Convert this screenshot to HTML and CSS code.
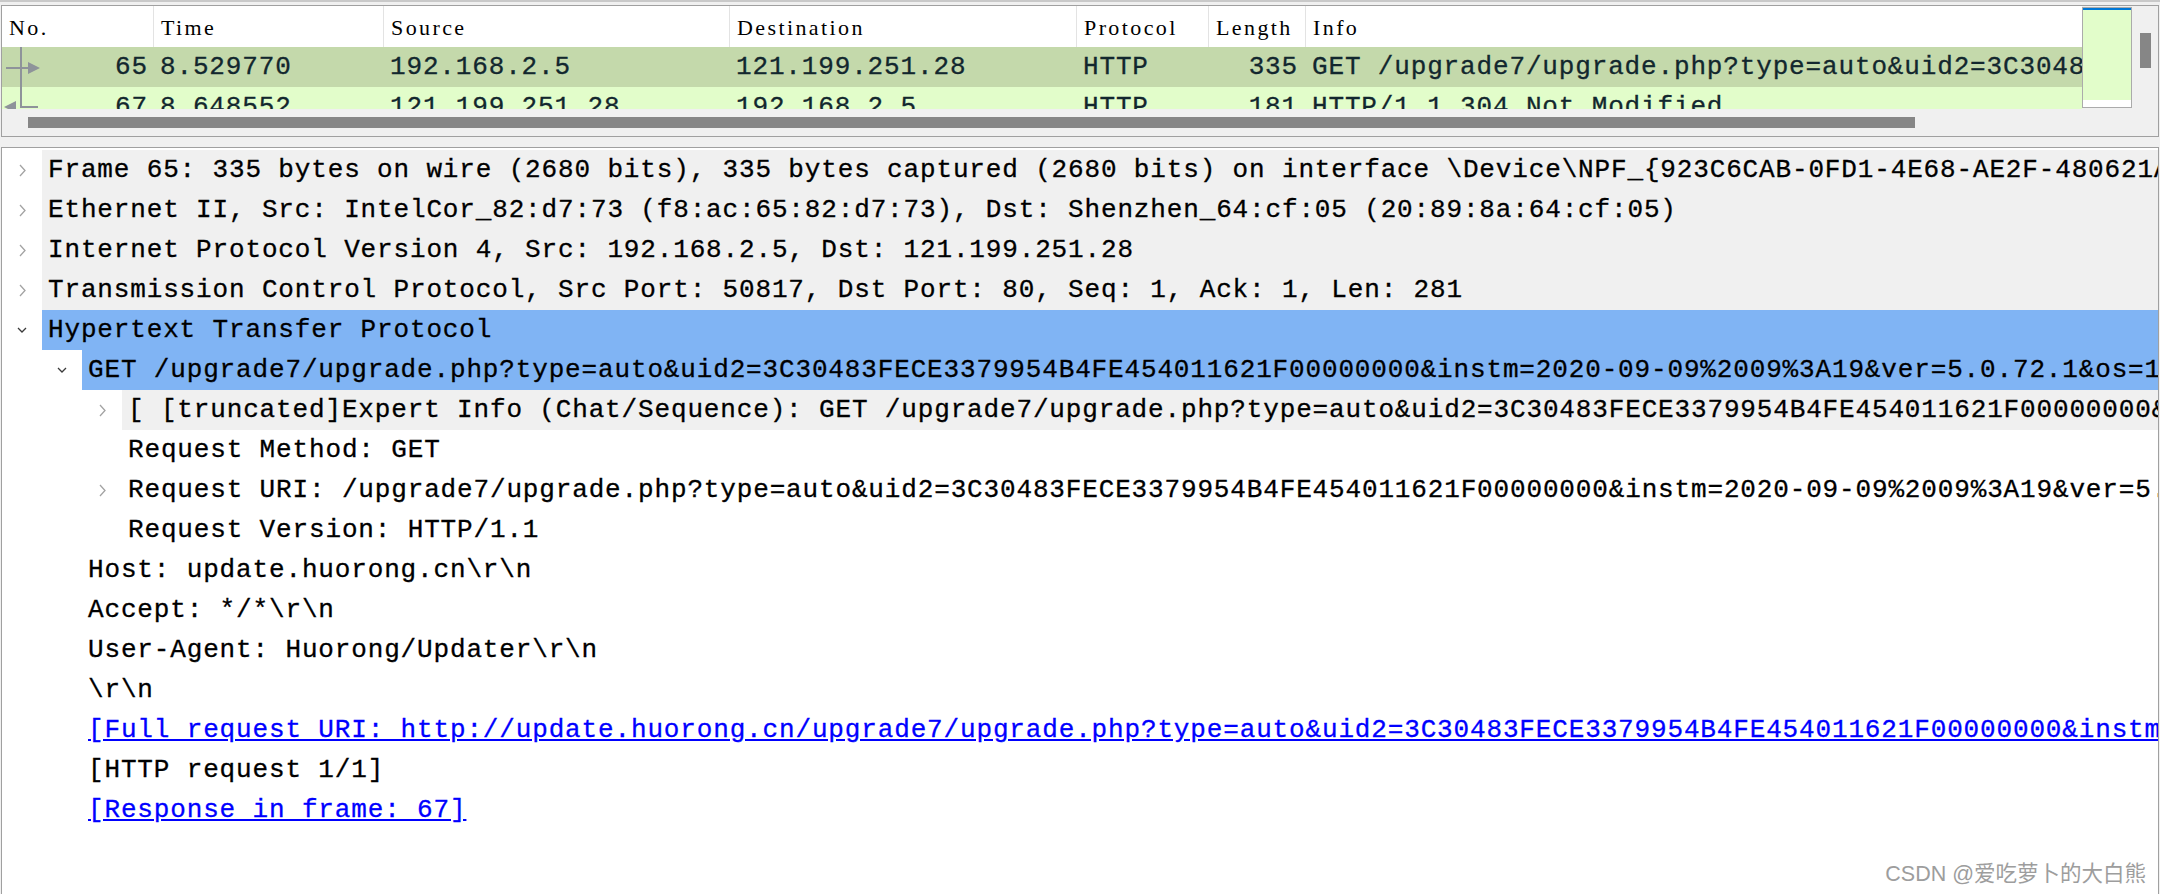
FILE: index.html
```html
<!DOCTYPE html>
<html>

<head>
    <title>Wireshark - Packet 65</title>
    <link rel="stylesheet" href="styles.css">
</head>

<body>
    <div class="topline"></div>

    <div class="list-pane">
        <div class="list-main">
            <div class="packets">
                <div class="cols head">
                    <span>No.</span>
                    <span>Time</span>
                    <span>Source</span>
                    <span>Destination</span>
                    <span>Protocol</span>
                    <span>Length</span>
                    <span class="last">Info</span>
                </div>
                <div class="cols row sel">
                    <span class="num">
                        <svg width="44" height="40" viewBox="0 0 44 40">
                            <path d="M19 0V40M4 21H27" stroke="#8e939a" stroke-width="2" fill="none"/>
                            <path d="M26 15L38 21L26 27Z" fill="#8e939a"/>
                        </svg>
                        <b>65</b>
                    </span>
                    <span>8.529770</span>
                    <span>192.168.2.5</span>
                    <span>121.199.251.28</span>
                    <span>HTTP</span>
                    <span class="right">335</span>
                    <span>GET /upgrade7/upgrade.php?type=auto&amp;uid2=3C30483FECE3379954B4FE454011621F00000000&amp;instm=2020-09-09%2009%3A19</span>
                </div>
                <div class="cols row http">
                    <span class="num">
                        <svg width="44" height="40" viewBox="0 0 44 40">
                            <path d="M19 0V20H36" stroke="#8e939a" stroke-width="2" fill="none"/>
                            <path d="M14 14L2 20L14 26Z" fill="#8e939a"/>
                        </svg>
                        <b>67</b>
                    </span>
                    <span>8.648552</span>
                    <span>121.199.251.28</span>
                    <span>192.168.2.5</span>
                    <span>HTTP</span>
                    <span class="right">181</span>
                    <span>HTTP/1.1 304 Not Modified</span>
                </div>
            </div>
            <div class="minimap"></div>
            <div class="vscroll"><div class="vthumb"></div></div>
        </div>
        <div class="hscroll"><div class="hthumb"></div></div>
    </div>

    <div class="detail-pane">
        <div class="node">
            <span class="tw"><svg width="7" height="13" viewBox="0 0 7 13"><path d="M1 1L6 6.5L1 12" fill="none" stroke="#a3a3a3" stroke-width="1.3"/></svg></span>
            <span class="lbl gray">Frame 65: 335 bytes on wire (2680 bits), 335 bytes captured (2680 bits) on interface \Device\NPF_{923C6CAB-0FD1-4E68-AE2F-480621A</span>
        </div>
        <div class="node">
            <span class="tw"><svg width="7" height="13" viewBox="0 0 7 13"><path d="M1 1L6 6.5L1 12" fill="none" stroke="#a3a3a3" stroke-width="1.3"/></svg></span>
            <span class="lbl gray">Ethernet II, Src: IntelCor_82:d7:73 (f8:ac:65:82:d7:73), Dst: Shenzhen_64:cf:05 (20:89:8a:64:cf:05)</span>
        </div>
        <div class="node">
            <span class="tw"><svg width="7" height="13" viewBox="0 0 7 13"><path d="M1 1L6 6.5L1 12" fill="none" stroke="#a3a3a3" stroke-width="1.3"/></svg></span>
            <span class="lbl gray">Internet Protocol Version 4, Src: 192.168.2.5, Dst: 121.199.251.28</span>
        </div>
        <div class="node">
            <span class="tw"><svg width="7" height="13" viewBox="0 0 7 13"><path d="M1 1L6 6.5L1 12" fill="none" stroke="#a3a3a3" stroke-width="1.3"/></svg></span>
            <span class="lbl gray">Transmission Control Protocol, Src Port: 50817, Dst Port: 80, Seq: 1, Ack: 1, Len: 281</span>
        </div>
        <div class="node">
            <span class="tw"><svg width="10" height="6" viewBox="0 0 10 6"><path d="M1 1L5 5L9 1" fill="none" stroke="#3a3a3a" stroke-width="1.3"/></svg></span>
            <span class="lbl blue">Hypertext Transfer Protocol</span>
        </div>
        <div class="node lv1">
            <span class="tw"><svg width="10" height="6" viewBox="0 0 10 6"><path d="M1 1L5 5L9 1" fill="none" stroke="#3a3a3a" stroke-width="1.3"/></svg></span>
            <span class="lbl blue">GET /upgrade7/upgrade.php?type=auto&amp;uid2=3C30483FECE3379954B4FE454011621F00000000&amp;instm=2020-09-09%2009%3A19&amp;ver=5.0.72.1&amp;os=1 HTTP/1.1\r\n</span>
        </div>
        <div class="node lv2">
            <span class="tw"><svg width="7" height="13" viewBox="0 0 7 13"><path d="M1 1L6 6.5L1 12" fill="none" stroke="#a3a3a3" stroke-width="1.3"/></svg></span>
            <span class="lbl gray">[ [truncated]Expert Info (Chat/Sequence): GET /upgrade7/upgrade.php?type=auto&amp;uid2=3C30483FECE3379954B4FE454011621F00000000&amp;instm=</span>
        </div>
        <div class="node lv2">
            <span class="tw"></span>
            <span class="lbl">Request Method: GET</span>
        </div>
        <div class="node lv2">
            <span class="tw"><svg width="7" height="13" viewBox="0 0 7 13"><path d="M1 1L6 6.5L1 12" fill="none" stroke="#a3a3a3" stroke-width="1.3"/></svg></span>
            <span class="lbl">Request URI: /upgrade7/upgrade.php?type=auto&amp;uid2=3C30483FECE3379954B4FE454011621F00000000&amp;instm=2020-09-09%2009%3A19&amp;ver=5.0.72.1&amp;os=1</span>
        </div>
        <div class="node lv2">
            <span class="tw"></span>
            <span class="lbl">Request Version: HTTP/1.1</span>
        </div>
        <div class="node lv1">
            <span class="tw"></span>
            <span class="lbl">Host: update.huorong.cn\r\n</span>
        </div>
        <div class="node lv1">
            <span class="tw"></span>
            <span class="lbl">Accept: */*\r\n</span>
        </div>
        <div class="node lv1">
            <span class="tw"></span>
            <span class="lbl">User-Agent: Huorong/Updater\r\n</span>
        </div>
        <div class="node lv1">
            <span class="tw"></span>
            <span class="lbl">\r\n</span>
        </div>
        <div class="node lv1">
            <span class="tw"></span>
            <span class="lbl"><a class="link">[Full request URI: http://update.huorong.cn/upgrade7/upgrade.php?type=auto&amp;uid2=3C30483FECE3379954B4FE454011621F00000000&amp;instm=2020-09-09%2009%3A19&amp;ver=5.0.72.1&amp;os=1]</a></span>
        </div>
        <div class="node lv1">
            <span class="tw"></span>
            <span class="lbl">[HTTP request 1/1]</span>
        </div>
        <div class="node lv1">
            <span class="tw"></span>
            <span class="lbl"><a class="link">[Response in frame: 67]</a></span>
        </div>
    </div>

    <div class="mark">CSDN @爱吃萝卜的大白熊</div>
</body>

</html>
```

FILE: styles.css
```css
body {
    margin: 0;
    height: 894px;
    overflow: hidden;
    position: relative;
    background-color: #f0f0f0;
    font-family: "Liberation Mono", monospace;
    font-size: 26px;
    color: #000;
}

.topline {
    height: 2px;
    background-color: #c9c9c9;
}

/* packet list */
.list-pane {
    margin: 3px 1px 0;
    border: 1px solid #a0a0a0;
}

.list-main {
    display: flex;
    height: 103px;
}

.packets {
    flex: 1;
    min-width: 0;
    overflow: hidden;
    background-color: #fff;
}

.cols {
    display: grid;
    grid-template-columns: 152px 230px 346px 347px 132px 97px minmax(0, 1fr);
}

.head {
    height: 41px;
}

.head span {
    display: flex;
    align-items: center;
    padding: 3px 7px 0;
    border-right: 1px solid #e3e3e3;
    font-family: "Liberation Serif", serif;
    font-size: 22px;
    letter-spacing: 2.4px;
    white-space: nowrap;
}

.head .last {
    border-right: none;
}

.row {
    height: 40px;
    line-height: 40px;
    color: #12272e;
    letter-spacing: 0.85px;
    -webkit-text-stroke: 0.3px currentColor;
}

.row span {
    padding: 0 6px;
    white-space: pre;
    overflow: hidden;
}

.row .num {
    display: flex;
    padding: 0 6px 0 0;
}

.num svg {
    flex: none;
}

.num b {
    margin-left: auto;
    font-weight: normal;
}

.row .right {
    text-align: right;
    padding-right: 8px;
}

.sel {
    background-color: #c4d9ab;
}

.http {
    background-color: #e2fdca;
}

.minimap {
    width: 50px;
    height: 101px;
    margin-top: 1px;
    box-sizing: border-box;
    border: 1px solid #ababab;
    background: linear-gradient(#0078d7 0 2px, #e2fdca 2px 92px, #fff 92px);
}

.vscroll {
    width: 26px;
    position: relative;
}

.vthumb {
    position: absolute;
    top: 27px;
    left: 8px;
    width: 11px;
    height: 35px;
    background-color: #868686;
}

.hscroll {
    height: 27px;
    padding-top: 8px;
    box-sizing: border-box;
}

.hthumb {
    margin-left: 26px;
    width: 1887px;
    height: 11px;
    background-color: #868686;
}

/* packet details */
.detail-pane {
    margin: 10px 1px 0;
    border: 1px solid #a0a0a0;
    border-bottom: none;
    padding-top: 2px;
    height: 800px;
    background-color: #fff;
}

.node {
    display: flex;
    height: 40px;
    line-height: 40px;
}

.lv1 {
    padding-left: 40px;
}

.lv2 {
    padding-left: 80px;
}

.tw {
    flex: none;
    width: 40px;
    display: flex;
    align-items: center;
    justify-content: center;
}

.lbl {
    flex: 1;
    min-width: 0;
    padding-left: 6px;
    white-space: pre;
    overflow: hidden;
    letter-spacing: 0.85px;
    -webkit-text-stroke: 0.3px currentColor;
}

.gray {
    background-color: #f0f0f0;
}

.blue {
    background-color: #80b4f4;
}

.link {
    color: #0000ff;
    text-decoration: underline;
}

.mark {
    position: absolute;
    right: 14px;
    bottom: 7px;
    font-family: "Liberation Sans Narrow", "Liberation Sans", "Noto Sans CJK SC", sans-serif;
    font-size: 21.5px;
    color: #9d9d9d;
}
```
